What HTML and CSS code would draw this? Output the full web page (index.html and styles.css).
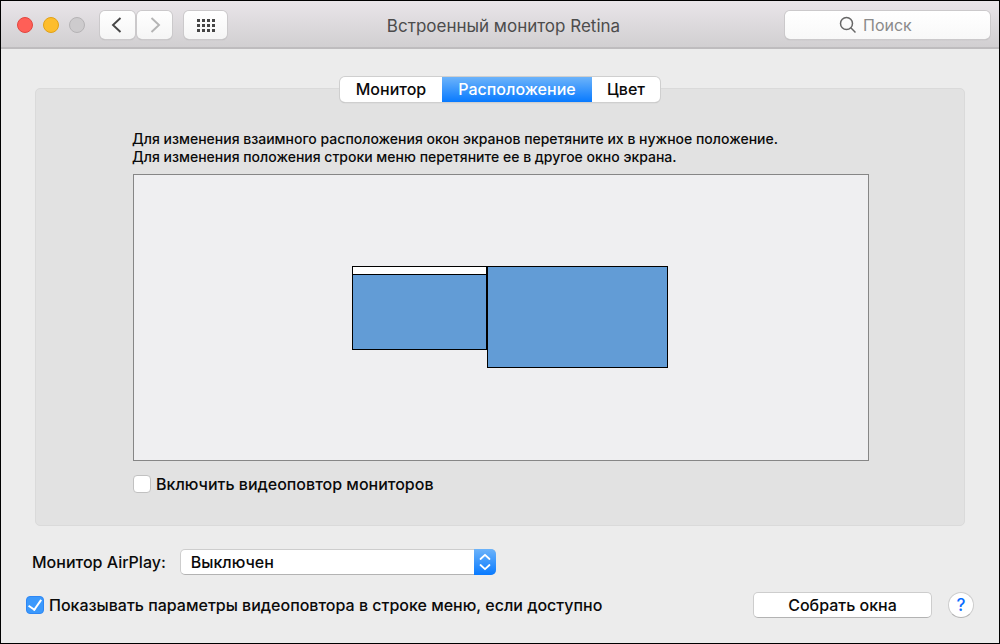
FILE: index.html
```html
<!DOCTYPE html>
<html lang="ru">
<head>
<meta charset="utf-8">
<title>Встроенный монитор Retina</title>
<link rel="stylesheet" href="styles.css">
</head>
<body>
<div class="window">
  <header class="toolbar">
    <div class="toolbar-left">
      <div class="lights">
        <button class="light light-close" type="button" aria-label="Закрыть"></button>
        <button class="light light-min" type="button" aria-label="Свернуть"></button>
        <button class="light light-zoom" type="button" aria-label="Развернуть" disabled></button>
      </div>
      <div class="nav">
        <button class="tool" type="button" aria-label="Назад"><svg width="14" height="18" viewBox="0 0 14 18"><path d="M9.500 2L2 9l7.500 7" fill="none" stroke="#454545" stroke-width="1.900"/></svg></button>
        <button class="tool" type="button" aria-label="Вперёд" disabled><svg width="14" height="18" viewBox="0 0 14 18"><path d="M3.500 2L11 9l-7.500 7" fill="none" stroke="#b4b4b4" stroke-width="1.900"/></svg></button>
      </div>
      <button class="tool tool-grid" type="button" aria-label="Показать все">
        <svg width="20" height="14" viewBox="0 0 20 14" fill="#454545"><path d="M1 1h3v3H1zM6 1h3v3H6zM11 1h3v3h-3zM16 1h3v3h-3zM1 6h3v3H1zM6 6h3v3H6zM11 6h3v3h-3zM16 6h3v3h-3zM1 11h3v3H1zM6 11h3v3H6zM11 11h3v3h-3zM16 11h3v3h-3z"/></svg>
      </button>
    </div>
    <h1 class="title">Встроенный монитор Retina</h1>
    <label class="search">
      <svg width="18" height="18" viewBox="0 0 18 18" fill="none" stroke="#666" stroke-width="1.500"><circle cx="7.500" cy="7.500" r="6"/><path d="M11.800 11.800L16.500 16.500"/></svg>
      <input class="search-input" type="search" placeholder="Поиск" aria-label="Поиск">
    </label>
  </header>

  <main class="content">
    <div class="tabs" role="tablist">
      <button class="tab" type="button" role="tab" aria-selected="false">Монитор</button>
      <button class="tab tab-active" type="button" role="tab" aria-selected="true">Расположение</button>
      <button class="tab" type="button" role="tab" aria-selected="false">Цвет</button>
    </div>

    <section class="panel">
      <p class="hint">Для изменения взаимного расположения окон экранов перетяните их в нужное положение.<br>Для изменения положения строки меню перетяните ее в другое окно экрана.</p>
      <div class="canvas">
        <div class="display display-main"><div class="menubar"></div></div>
        <div class="display display-second"></div>
      </div>
      <label class="check"><input class="box" type="checkbox">Включить видеоповтор мониторов</label>
    </section>

    <div class="airplay">
      <label for="airplay">Монитор AirPlay:</label>
      <div class="select-wrap">
        <select class="select" id="airplay"><option>Выключен</option></select>
        <span class="select-cap"><svg width="12" height="18" viewBox="0 0 12 18" fill="none" stroke="#fff" stroke-width="1.800" stroke-linecap="round" stroke-linejoin="round"><path d="M1.500 6L6 1.800L10.500 6M1.500 12L6 16.200L10.500 12"/></svg></span>
      </div>
    </div>

    <div class="footer">
      <label class="check"><input class="box" type="checkbox" checked>Показывать параметры видеоповтора в строке меню, если доступно</label>
      <div class="actions">
        <button class="gather" type="button">Собрать окна</button>
        <button class="help" type="button" aria-label="Справка">?</button>
      </div>
    </div>
  </main>
</div>
</body>
</html>
```
FILE: styles.css
```css
* {
  box-sizing: border-box;
}

body {
  margin: 0;
  background: #000;
  color: #0a0a0a;
  font: 500 16px/20px Inter, "Liberation Sans", sans-serif;
}

button,
input,
select {
  margin: 0;
  padding: 0;
  color: inherit;
  font: inherit;
}

.window {
  min-height: 100vh;
  border: 1px solid #000;
  background: #ececec;
}

.toolbar {
  display: grid;
  grid-template-columns: 1fr auto 1fr;
  align-items: center;
  height: 48px;
  padding: 1px 9px 0 16px;
  border-bottom: 2px solid #bebcbe;
  background: linear-gradient(#e9e5e9, #d1cfd1);
}

.toolbar-left,
.lights,
.nav {
  display: flex;
  align-items: center;
}

.toolbar-left {
  gap: 12px;
}

.lights {
  gap: 10px;
  margin-right: 3px;
}

.light {
  width: 16px;
  height: 16px;
  border: 1px solid #e2463f;
  border-radius: 50%;
  background: #ff5f57;
}

.light-min {
  border-color: #e1a116;
  background: #fdbd2c;
}

.light-zoom {
  border-color: #b5b3b5;
  background: #cdcbcd;
}

.nav {
  gap: 2px;
}

.tool {
  display: grid;
  place-items: center;
  width: 35px;
  height: 28px;
  border: 0;
  border-radius: 5px;
  background: linear-gradient(#fff, #f5f5f5);
  box-shadow: 0 0 0 1px #cbc9cb, 0 1px 1px #a3a1a3;
}

.tool-grid {
  width: 43px;
}

.title {
  margin: 2px 0 0;
  color: #4c4c4c;
  font-size: 17px;
  font-weight: 400;
}

.search {
  display: flex;
  align-items: center;
  justify-self: end;
  gap: 6px;
  width: 205px;
  height: 28px;
  padding-left: 54px;
  border-radius: 5px;
  background: linear-gradient(#fff, #f8f8f8);
  box-shadow: 0 0 0 1px #cbc9cb, 0 1px 1px #a3a1a3;
}

.search-input {
  flex: 1;
  min-width: 0;
  border: 0;
  outline: 0;
  background: none;
  font-weight: 400;
}

.search-input::placeholder {
  color: #8a8a8a;
}

.content {
  padding: 28px 34px 24px;
}

.tabs {
  position: relative;
  display: flex;
  width: max-content;
  height: 25px;
  margin: 0 auto;
  border-radius: 5px;
  background: #fff;
  box-shadow: 0 0 0 1px #cfcfcf, 0 1px 1px #a8a8a8;
}

.tab {
  width: 102px;
  padding-bottom: 2px;
  border: 0;
  border-radius: 5px;
  background: none;
}

.tab:last-child {
  width: 68px;
}

.tab-active {
  width: 150px;
  border-radius: 0;
  background: linear-gradient(#6cb3fa, #087aff);
  color: #fff;
}

.panel {
  margin-top: -14px;
  padding: 41px 95px 31px 97px;
  border: 1px solid #dadada;
  border-radius: 5px;
  background: #e2e2e2;
}

.hint {
  margin: 0 0 8px -1px;
  font-size: 14px;
  line-height: 18px;
  white-space: nowrap;
}

.canvas {
  position: relative;
  height: 287px;
  margin-bottom: 13px;
  border: 1px solid #868686;
  background: #efeff1;
}

.display {
  position: absolute;
  top: 91px;
  border: 1px solid #000;
  background: #629cd6;
}

.display-main {
  left: 218px;
  width: 135px;
  height: 84px;
}

.display-second {
  left: 353px;
  width: 181px;
  height: 102px;
}

.menubar {
  height: 8px;
  border-bottom: 1px solid #000;
  background: #fff;
}

.check {
  display: flex;
  align-items: center;
  gap: 5px;
}

.box {
  display: grid;
  place-items: center;
  width: 18px;
  height: 18px;
  border: 1px solid #c1c1c1;
  border-radius: 4px;
  background: #fff;
  appearance: none;
}

.box:checked {
  border-color: #2e87f5;
  background: #3b99fc;
}

.box:checked::before {
  content: "";
  width: 6px;
  height: 11px;
  margin-bottom: 3px;
  border: solid #fff;
  border-width: 0 2px 2px 0;
  transform: rotate(35deg);
}

.airplay {
  display: flex;
  align-items: center;
  gap: 14px;
  margin: 23px 0 17px -3px;
}

.select-wrap {
  position: relative;
  width: 316px;
}

.select {
  display: block;
  width: 100%;
  height: 26px;
  padding: 0 30px 0 10px;
  border: 1px solid #cdcdcd;
  border-bottom-color: #b3b3b3;
  border-radius: 5px;
  background: #fff;
  appearance: none;
}

.select-cap {
  position: absolute;
  top: 0;
  right: 0;
  display: grid;
  place-items: center;
  width: 22px;
  height: 26px;
  border-radius: 0 5px 5px 0;
  background: linear-gradient(#6cb3fa, #087aff);
  pointer-events: none;
}

.footer {
  display: flex;
  align-items: center;
  justify-content: space-between;
  margin: 0 -9px;
}

.actions {
  display: flex;
  align-items: center;
  gap: 16px;
}

.gather,
.help {
  height: 26px;
  border: 1px solid #cdcdcd;
  border-bottom-color: #b3b3b3;
  border-radius: 5px;
  background: #fff;
}

.gather {
  width: 179px;
}

.help {
  width: 26px;
  border-radius: 50%;
  color: #0a6cff;
  font-size: 17px;
}
```
